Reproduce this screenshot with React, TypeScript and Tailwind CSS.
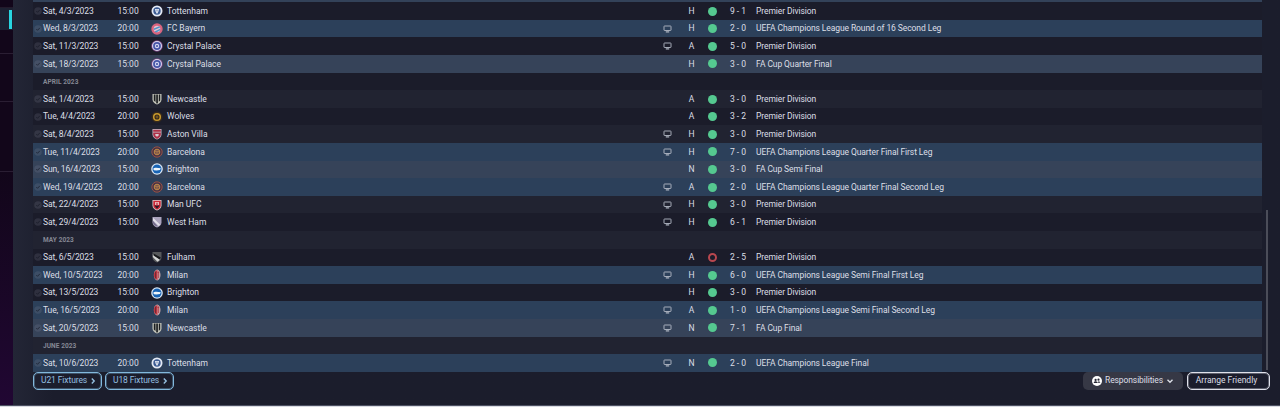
import type { ReactNode } from "react";
import clsx from "clsx";

type Kind = "league" | "europe" | "cup";

type Fixture = {
  date: string;
  time: string;
  team: string;
  tv?: boolean;
  venue: "H" | "A" | "N";
  lost?: boolean;
  score: string;
  competition: string;
  kind: Kind;
};

type Row = Fixture | { month: string };

const PL = "Premier Division";
const CL = "UEFA Champions League";

const rows: Row[] = [
  { date: "Sat, 4/3/2023", time: "15:00", team: "Tottenham", venue: "H", score: "9 - 1", competition: PL, kind: "league" },
  { date: "Wed, 8/3/2023", time: "20:00", team: "FC Bayern", tv: true, venue: "H", score: "2 - 0", competition: `${CL} Round of 16 Second Leg`, kind: "europe" },
  { date: "Sat, 11/3/2023", time: "15:00", team: "Crystal Palace", tv: true, venue: "A", score: "5 - 0", competition: PL, kind: "league" },
  { date: "Sat, 18/3/2023", time: "15:00", team: "Crystal Palace", venue: "H", score: "3 - 0", competition: "FA Cup Quarter Final", kind: "cup" },
  { month: "APRIL 2023" },
  { date: "Sat, 1/4/2023", time: "15:00", team: "Newcastle", venue: "A", score: "3 - 0", competition: PL, kind: "league" },
  { date: "Tue, 4/4/2023", time: "20:00", team: "Wolves", venue: "A", score: "3 - 2", competition: PL, kind: "league" },
  { date: "Sat, 8/4/2023", time: "15:00", team: "Aston Villa", tv: true, venue: "H", score: "3 - 0", competition: PL, kind: "league" },
  { date: "Tue, 11/4/2023", time: "20:00", team: "Barcelona", tv: true, venue: "H", score: "7 - 0", competition: `${CL} Quarter Final First Leg`, kind: "europe" },
  { date: "Sun, 16/4/2023", time: "15:00", team: "Brighton", venue: "N", score: "3 - 0", competition: "FA Cup Semi Final", kind: "cup" },
  { date: "Wed, 19/4/2023", time: "20:00", team: "Barcelona", tv: true, venue: "A", score: "2 - 0", competition: `${CL} Quarter Final Second Leg`, kind: "europe" },
  { date: "Sat, 22/4/2023", time: "15:00", team: "Man UFC", tv: true, venue: "H", score: "3 - 0", competition: PL, kind: "league" },
  { date: "Sat, 29/4/2023", time: "15:00", team: "West Ham", tv: true, venue: "H", score: "6 - 1", competition: PL, kind: "league" },
  { month: "MAY 2023" },
  { date: "Sat, 6/5/2023", time: "15:00", team: "Fulham", venue: "A", lost: true, score: "2 - 5", competition: PL, kind: "league" },
  { date: "Wed, 10/5/2023", time: "20:00", team: "Milan", tv: true, venue: "H", score: "6 - 0", competition: `${CL} Semi Final First Leg`, kind: "europe" },
  { date: "Sat, 13/5/2023", time: "15:00", team: "Brighton", venue: "H", score: "3 - 0", competition: PL, kind: "league" },
  { date: "Tue, 16/5/2023", time: "20:00", team: "Milan", tv: true, venue: "A", score: "1 - 0", competition: `${CL} Semi Final Second Leg`, kind: "europe" },
  { date: "Sat, 20/5/2023", time: "15:00", team: "Newcastle", tv: true, venue: "N", score: "7 - 1", competition: "FA Cup Final", kind: "cup" },
  { month: "JUNE 2023" },
  { date: "Sat, 10/6/2023", time: "20:00", team: "Tottenham", tv: true, venue: "N", score: "2 - 0", competition: `${CL} Final`, kind: "europe" },
];

const SHIELD = "M1.5 1h9v5.5c0 2.4-2 4-4.5 5-2.5-1-4.5-2.6-4.5-5z";

const crests: Record<string, ReactNode> = {
  Tottenham: (
    <>
      <circle cx="6" cy="6" r="5.5" fill="#e3e9f4" />
      <circle cx="6" cy="6" r="3.7" fill="#3c5c94" />
      <path d="M4 4h4L7.400 6.600 6 9 4.600 6.600z" fill="#eef2fa" />
      <path d="M5.600 4.500h.8v2h-.8z" fill="#3c5c94" />
    </>
  ),
  "FC Bayern": (
    <>
      <circle cx="6" cy="6" r="5.7" fill="#d9647f" />
      <circle cx="6" cy="6" r="3.3" fill="#e6c3d2" />
      <path d="M2.800 5.600 8.300 3.200l.8 1.200-6 2.700zM3.500 8.500 9.200 5.700v1.600L5.200 9.400z" fill="#4d93c9" />
    </>
  ),
  "Crystal Palace": (
    <>
      <circle cx="6" cy="6" r="5.8" fill="#76407e" />
      <circle cx="6" cy="6" r="5" fill="#d9d8ee" />
      <circle cx="6" cy="6" r="3.9" fill="#4755a8" />
      <circle cx="6" cy="6" r="2.2" fill="#d5d8f0" />
      <circle cx="6" cy="6" r="1.1" fill="#4755a8" />
    </>
  ),
  Newcastle: (
    <>
      <path d={SHIELD} fill="#c4c5bb" />
      <path d="M2.800 1.500h1.700v7.500L2.800 7.500zM5.200 1.500h1.700V10l-.9.700-.8-.7zM7.800 1.500h1.400v6L7.800 8.800z" fill="#1c1e21" />
    </>
  ),
  Wolves: (
    <>
      <circle cx="6" cy="6" r="5.6" fill="#35291d" />
      <circle cx="6" cy="6" r="3.3" fill="none" stroke="#c8992c" strokeWidth="1.5" />
      <circle cx="6" cy="6" r="1.4" fill="#74551c" />
    </>
  ),
  "Aston Villa": (
    <>
      <path d={SHIELD} fill="#c5bcc7" />
      <path d="M2.200 1.700h7.600v2H2.200zM2.200 4.500h7.600v2.200C9.500 8.800 8 10 6 10.900 4 10 2.500 8.800 2.200 6.700z" fill="#ad3047" />
      <path d="M4.300 6h3.400v1.500L6 8.800 4.300 7.500z" fill="#dacbd2" />
    </>
  ),
  Barcelona: (
    <>
      <circle cx="6" cy="6" r="5.2" fill="#4b3444" stroke="#955146" />
      <circle cx="6" cy="6" r="2.8" fill="#63404a" stroke="#c28c48" />
      <path d="M4 5.200h4M4.500 7h3" stroke="#d09a4c" strokeWidth=".8" />
    </>
  ),
  Brighton: (
    <>
      <circle cx="6" cy="6" r="5.8" fill="#dce8f5" />
      <circle cx="6" cy="6" r="4.5" fill="#1763b4" />
      <path d="M2.200 5.800c1-1 1.800-1.300 3-1l4.600.5-.8 1.700-3.500.5-2.600-.2z" fill="#eef5fb" />
    </>
  ),
  "Man UFC": (
    <>
      <path d={SHIELD} fill="#dccfd2" />
      <path d="M2.300 1.700h7.400v4.700c0 2-1.500 3.300-3.700 4.300-2.200-1-3.700-2.300-3.700-4.300z" fill="#cc2636" />
      <path d="M4.200 3h3.600v3H4.200z" fill="#f0dadb" />
      <path d="M3.300 6.500h5.400L6 9.700z" fill="#291b28" />
      <path d="M5.300 3.400h1.400v3.300H5.300z" fill="#c72b39" />
    </>
  ),
  "West Ham": (
    <>
      <path d={SHIELD} fill="#aaa3bd" />
      <path d="M2 1.700 9.300 8.800 7.700 10 2 4.400z" fill="#e2e0e9" />
      <path d="m2 5 4.500 5.300-.5.300C3.500 9.700 2 8.200 2 6.500z" fill="#716a88" />
    </>
  ),
  Fulham: (
    <>
      <path d={SHIELD} fill="#57595c" />
      <path d="M1.800 3 9 8.800 6.500 10.800 1.800 6z" fill="#d5d6d6" />
      <path d="M2.500 2.500 9.800 6.500 8.700 8.500 2.500 4.500z" fill="#16171b" />
    </>
  ),
  Milan: (
    <>
      <ellipse cx="6.200" cy="6" rx="3.300" ry="5.400" fill="#c9a7ab" />
      <path d="M6.500 1C4 1.600 2.800 3.500 2.800 6s1.200 4.400 3.700 4.900z" fill="#c03540" />
      <path d="M4.600 2.800v6.400" stroke="#552432" strokeWidth=".8" />
      <path d="M6.500 3.500h1.600M7.600 2.300V9" stroke="#b23340" strokeWidth=".8" />
    </>
  ),
};

function Crest({ team }: { team: string }) {
  return (
    <svg viewBox="0 0 12 12" className="size-3 shrink-0">
      {crests[team]}
    </svg>
  );
}

function Tick() {
  return (
    <svg viewBox="0 0 8 8" className="ml-px size-2 shrink-0">
      <circle cx="4" cy="4" r="3.8" fill="#8a8f9f" fillOpacity=".18" />
      <path d="m2.300 4.100 1.200 1.200L5.900 2.800" fill="none" stroke="#131622" strokeOpacity=".65" />
    </svg>
  );
}

function Monitor() {
  return (
    <svg viewBox="0 0 9 8" className="h-2 w-[9px]" fill="none" stroke="#b4bac6" strokeWidth=".9">
      <path d="M1.500 1h6q.5 0 .5.500v3.500q0 .5-.5.500h-6q-.5 0-.5-.5V1.500q0-.5.5-.5z" />
      <path d="M2.800 6.900h3.400" strokeWidth="1.200" />
    </svg>
  );
}

function Result({ lost }: { lost?: boolean }) {
  if (lost) return <span className="size-[9px] rounded-full border-2 border-[#b8474f]" />;
  return <span className="size-[9px] rounded-full bg-[#55c990]" />;
}

function FixtureRow({ row, index }: { row: Row; index: number }) {
  const zebra = index % 2 ? "bg-[#212331]" : "bg-[#1b1c2a]";

  if ("month" in row) {
    return (
      <div className={clsx("flex h-[17.6px] items-center pt-[1.5px] pl-[10px] text-[6.5px] font-bold tracking-[0.08px] text-[#858894]", zebra)}>
        {row.month}
      </div>
    );
  }

  return (
    <div
      className={clsx(
        "flex h-[17.6px] items-center whitespace-pre",
        row.kind === "league" && zebra,
        row.kind === "europe" && "bg-[#2c405a]",
        row.kind === "cup" && "bg-[#364359]"
      )}
    >
      <Tick />
      <span className="ml-px w-[74.5px] tracking-[-0.1px]">{row.date}</span>
      <span className="w-[20px] text-center">{row.time}</span>
      <span className="ml-[13.5px] flex w-[509px] items-center gap-[4px]">
        <Crest team={row.team} />
        {row.team}
      </span>
      <span className="flex w-[15px] justify-center">{row.tv && <Monitor />}</span>
      <span className="ml-[11.5px] w-[10px] text-center">{row.venue}</span>
      <span className="ml-[11px] flex w-[9px]">
        <Result lost={row.lost} />
      </span>
      <span className="ml-[11.5px] w-[20px] text-center">{row.score}</span>
      <span className="ml-[8px] tracking-[-0.09px]">{row.competition}</span>
    </div>
  );
}

function Chevron({ down }: { down?: boolean }) {
  return (
    <svg viewBox="0 0 6 6" className="size-[6px]" fill="none" stroke="currentColor" strokeWidth="1.4">
      <path d={down ? "M.5 1.800 3 4.200 5.500 1.800" : "M1.800.5 4.200 3 1.800 5.500"} />
    </svg>
  );
}

function LinkButton({ children }: { children: ReactNode }) {
  return (
    <button className="flex h-[18px] w-[69px] items-center gap-[3px] rounded-[5px] border border-[#82b8dc] pb-px pl-[7px] tracking-[-0.1px] text-[#94bfe0] shadow-[inset_0_0_0_1px_rgba(130,184,220,0.35)]">
      {children}
      <Chevron />
    </button>
  );
}

export default function App() {
  return (
    <div className="flex h-[407px] w-[1280px] flex-col overflow-hidden bg-[#1c1e2d] font-['Roboto',sans-serif] text-[8.5px] leading-none text-[#dcdfe6]">
      <div className="flex h-[405px]">
        <aside className="flex w-[13px] shrink-0 flex-col bg-[#12061a]">
          <div className="h-[8px] border-b border-[#231a2c]" />
          <div className="flex h-[22px] items-center justify-end bg-[#1d2132] pr-px">
            <div className="h-[19px] w-[3px] bg-[#28d5e0]" />
          </div>
          <div className="h-[24px] border-b border-[#2a1e33]" />
          <div className="h-[48px] border-b border-[#2a1e33]" />
          <div className="h-[70px] border-b border-[#2a1e33]" />
          <div className="flex-1 bg-linear-to-b from-[#12061a] to-[#210733]" />
        </aside>

        <main className="flex flex-1 flex-col bg-linear-to-r from-[#232636] to-[#1b1d2c] to-[40px] pl-[20px]">
          <div className="flex h-[371px]">
            <div className="w-[1229px]">
              <div className="h-[2.3px] bg-[#334259]" />
              {rows.map((row, i) => (
                <FixtureRow key={i} row={row} index={i} />
              ))}
            </div>
            <div className="ml-[4px] mt-[210px] h-[160px] w-[2px] bg-[#4b4d59]" />
          </div>

          <div className="z-10 flex items-center justify-between pr-[10px]">
            <div className="mt-px flex gap-[3px]">
              <LinkButton>U21 Fixtures</LinkButton>
              <LinkButton>U18 Fixtures</LinkButton>
            </div>
            <div className="flex gap-[4px]">
              <button className="flex h-[18px] w-[100px] items-center rounded-[5px] bg-[#363845] pl-[9px]">
                <svg viewBox="0 0 10 10" className="mr-[3px] size-[10px]">
                  <circle cx="5" cy="5" r="5" fill="#fff" />
                  <circle cx="3.6" cy="3.9" r="1.1" fill="#272936" />
                  <circle cx="6.5" cy="3.7" r="1.1" fill="#272936" />
                  <path d="M1.700 7c0-2.200 3.600-2.200 3.800 0zM5.800 6.700c-.2-.8-.2-1.200.5-1.300 1.200-.1 1.900.4 2 1.300z" fill="#272936" />
                </svg>
                <span className="mr-[4px] pb-px tracking-[-0.1px]">Responsibilities</span>
                <Chevron down />
              </button>
              <button className="h-[18px] w-[83px] rounded-[5px] border border-[#dfe1ea] pr-[4px] pb-px shadow-[inset_0_0_0_1px_rgba(223,225,234,0.35)]">
                Arrange Friendly
              </button>
            </div>
          </div>
        </main>
      </div>
      <div className="h-px bg-[#4c5062]" />
      <div className="h-px bg-[#d9dbe2]" />
    </div>
  );
}
